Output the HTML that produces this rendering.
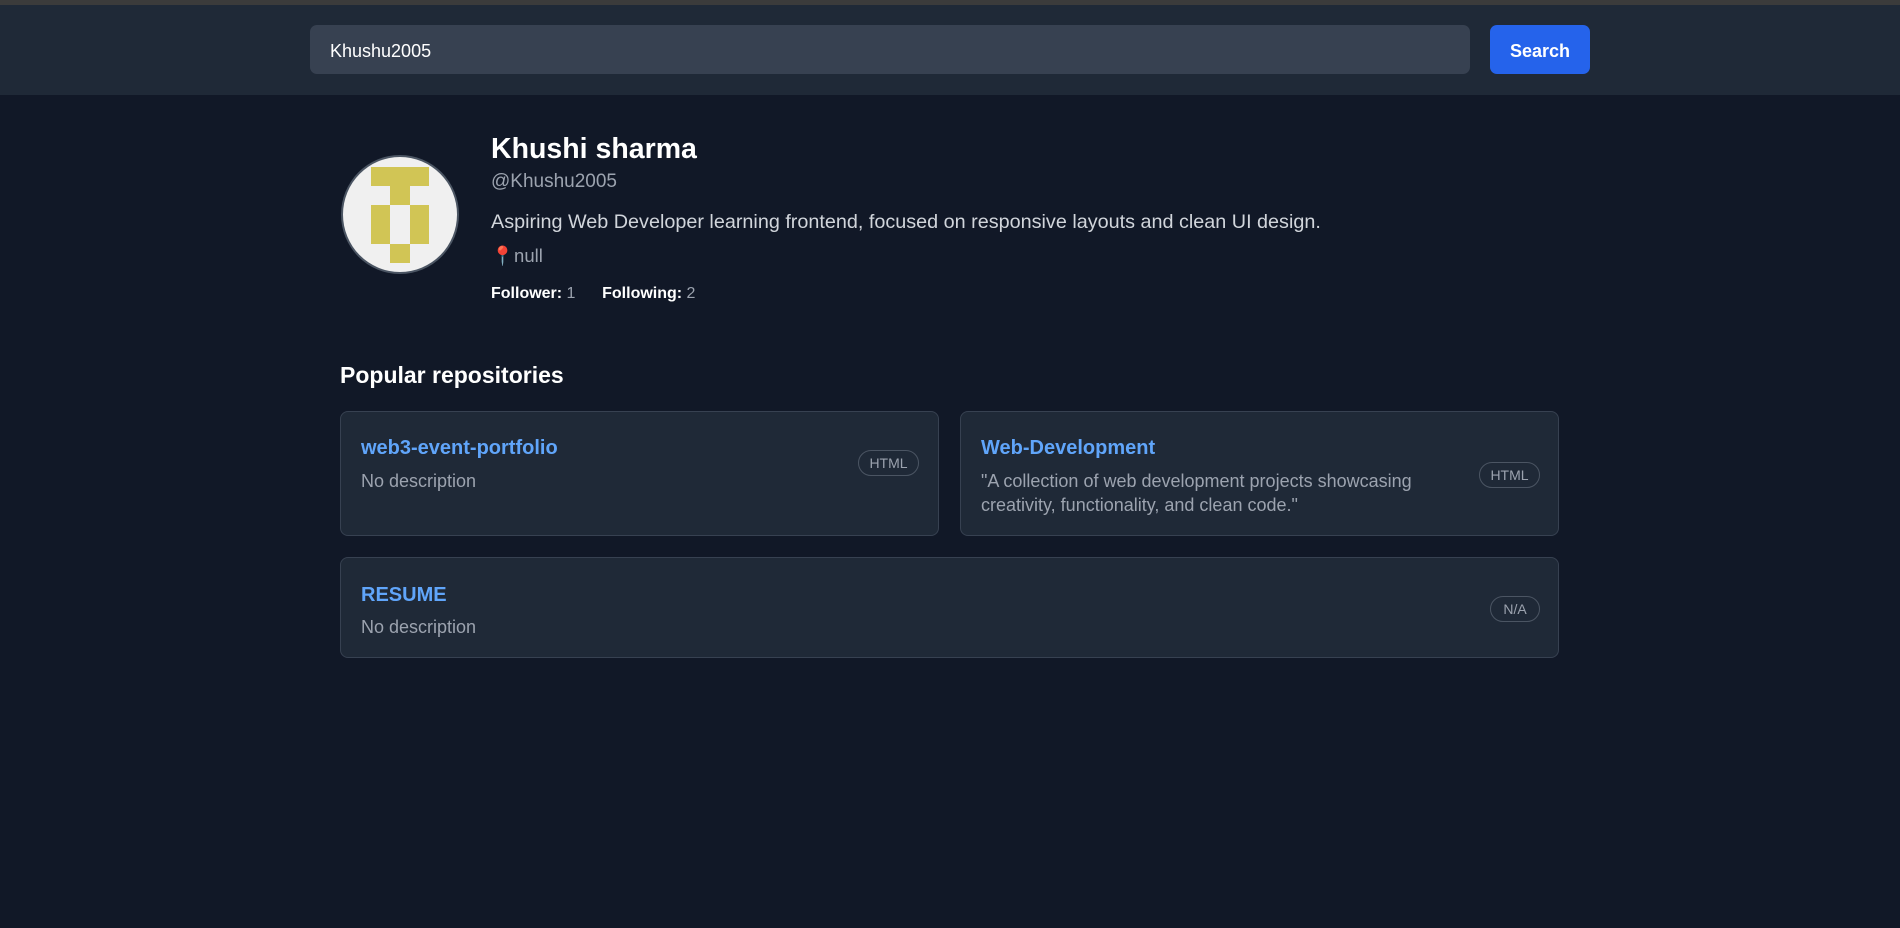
<!DOCTYPE html>
<html><head><meta charset="utf-8"><style>
*{box-sizing:border-box;margin:0;padding:0}
body{width:1900px;height:928px;background:#111827;font-family:"Liberation Sans",sans-serif;position:relative;overflow:hidden;color:#fff}
.top{position:absolute;left:0;top:0;width:1900px;height:5px;background:#3b3b3b}
.hdr{position:absolute;left:0;top:5px;width:1900px;height:90px;background:#1f2937}
.inp{position:absolute;left:310px;top:25px;width:1160px;height:49px;background:#374151;border-radius:7px;font-size:18px;line-height:53px;padding-left:20px;color:#fff}
.btn{position:absolute;left:1490px;top:25px;width:100px;height:49px;background:#2563eb;border-radius:7px;font-size:18px;font-weight:bold;line-height:53px;text-align:center}
.av{position:absolute;left:341px;top:155px;width:118px;height:119px;border-radius:50%;background:#f0f0f0;border:2px solid #4b5563;overflow:hidden}
.px{position:absolute;background:#d1c555}
.t{position:absolute;white-space:nowrap}
.card{position:absolute;background:#1f2937;border:1px solid #374151;border-radius:8px}
.ct{position:absolute;left:20px;font-size:20px;font-weight:bold;color:#60a5fa}
.cd{position:absolute;left:20px;font-size:18px;color:#9ca3af;line-height:24px}
.bd{position:absolute;height:26px;border:1px solid #4b5563;border-radius:13px;font-size:14px;color:#9ca3af;line-height:24px;text-align:center}
</style></head><body>
<div class="top"></div>
<div class="hdr"></div>
<div class="inp">Khushu2005</div>
<div class="btn">Search</div>
<div class="av"></div>
<div class="px" style="left:371px;top:167px;width:58px;height:19px"></div>
<div class="px" style="left:390px;top:186px;width:20px;height:19px"></div>
<div class="px" style="left:371px;top:205px;width:19px;height:39px"></div>
<div class="px" style="left:410px;top:205px;width:19px;height:39px"></div>
<div class="px" style="left:390px;top:244px;width:20px;height:19px"></div>
<div class="t" style="left:491px;top:133px;font-size:28.5px;font-weight:bold">Khushi sharma</div>
<div class="t" style="left:491px;top:171px;font-size:19px;color:#9ca3af">@Khushu2005</div>
<div class="t" style="left:491px;top:211px;font-size:19.8px;color:#d1d5db">Aspiring Web Developer learning frontend, focused on responsive layouts and clean UI design.</div>
<div class="t" style="left:491px;top:245px;font-size:18.5px;color:#9ca3af"><span style="color:#e11d48">📍</span>null</div>
<div class="t" style="left:491px;top:285px;font-size:16px;color:#9ca3af"><b style="color:#fff">Follower:</b> 1 &nbsp;&nbsp;&nbsp;&nbsp; <b style="color:#fff">Following:</b> 2</div>
<div class="t" style="left:340px;top:362px;font-size:23px;font-weight:bold">Popular repositories</div>
<div class="card" style="left:340px;top:411px;width:599px;height:125px">
<div class="ct" style="top:25px">web3-event-portfolio</div>
<div class="cd" style="top:57px">No description</div>
<div class="bd" style="left:517px;top:38px;width:61px">HTML</div>
</div>
<div class="card" style="left:960px;top:411px;width:599px;height:125px">
<div class="ct" style="top:25px">Web-Development</div>
<div class="cd" style="top:57px">"A collection of web development projects showcasing<br>creativity, functionality, and clean code."</div>
<div class="bd" style="left:518px;top:50px;width:61px">HTML</div>
</div>
<div class="card" style="left:340px;top:557px;width:1219px;height:101px">
<div class="ct" style="top:26px">RESUME</div>
<div class="cd" style="top:57px">No description</div>
<div class="bd" style="left:1149px;top:38px;width:50px">N/A</div>
</div>
</body></html>
